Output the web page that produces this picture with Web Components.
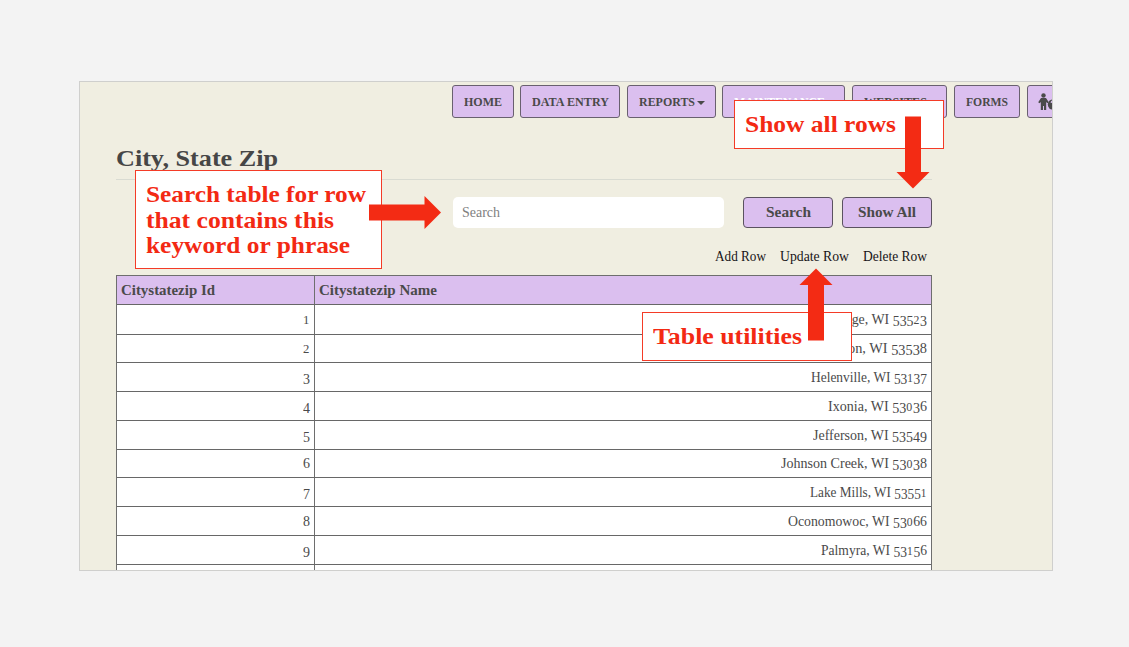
<!DOCTYPE html>
<html lang="en"><head><meta charset="utf-8"><title>City, State Zip</title>
<style>
html,body{margin:0;height:647px;overflow:hidden;background:#f3f3f3}
body{padding:81px 0 0 79px;box-sizing:border-box;font-family:"Liberation Serif",Georgia,serif;color:#4a4a4a}
</style></head><body>
<admin-page></admin-page>
<script>
function define(name, html, setup){
  const t=document.createElement('template'); t.innerHTML=html;
  customElements.define(name, class extends HTMLElement{
    connectedCallback(){
      if(this.shadowRoot) return;
      this.attachShadow({mode:'open'}).append(t.content.cloneNode(true));
      if(setup) setup(this,this.shadowRoot);
    }
  });
}
/* Stretches a line of text to the width given in the w attribute. */
define('fit-text',`<style>:host{display:inline-block;white-space:nowrap;line-height:1}span{display:inline-block;transform-origin:0 50%}</style><span><slot></slot></span>`,(el,r)=>{
  const s=r.querySelector('span'), w=+el.getAttribute('w');
  el.style.width=w+'px';
  s.style.transform='scaleX('+w/s.getBoundingClientRect().width+')';
});
/* Old-style figures: 0-2 at x-height, 3 4 5 7 9 hanging below the baseline. */
function figures(t){
  return t.replace(/[0-9]/g,d=>'012'.includes(d)
    ?`<span style="font-size:12px;line-height:0;letter-spacing:.6px">${d}</span>`
    :'34579'.includes(d)?`<span style="vertical-align:-2px;line-height:0">${d}</span>`:d);
}
define('nav-item',`<style>
:host{display:flex;box-sizing:border-box;height:33px;flex:none;border:1px solid #69606f;border-radius:3px;background:#dbbfef;align-items:center;padding:0 0 0 11px;font-size:13.2px;font-weight:bold;gap:2px}
.c{display:none;width:0;height:0;border:solid transparent;border-width:4px 4px 0;border-top-color:currentColor;margin-top:2px}
:host([menu]) .c{display:block}:host([active]){color:#fff}
</style><slot></slot><i class="c"></i>`,(el)=>{el.style.width=el.getAttribute('width')+'px'});
define('nav-bar',`<style>
:host{display:flex;gap:7px;padding:3px 0 0 372px;height:33px}
nav-item[active]{margin-left:-1px}
svg{display:block;margin-left:-1px}</style>
<nav-item width="62"><fit-text w="38">HOME</fit-text></nav-item>
<nav-item width="100" style="margin-left:-1px"><fit-text w="77">DATA ENTRY</fit-text></nav-item>
<nav-item width="89" menu><fit-text w="56">REPORTS</fit-text></nav-item>
<nav-item width="123" menu active><fit-text w="91">MAINTENANCE</fit-text></nav-item>
<nav-item width="95" menu><fit-text w="63">WEBSITES</fit-text></nav-item>
<nav-item width="66"><fit-text w="42">FORMS</fit-text></nav-item>
<nav-item width="60"><svg width="26" height="18" viewBox="0 0 26 18"><circle cx="5.5" cy="2.5" r="2.200" fill="#4a4a4a"/><path d="M3 5h5l2.800 4.200-1.300 1L8.200 9v8H6v-4h-1v4H2.800V9l-1.300 1.200-1.300-1z" fill="#4a4a4a"/><circle cx="15" cy="11.500" r="5.200" fill="#4a4a4a"/><path d="M13.200 10q.2-2 1.800-2t1.800 1.500q0 1-1.800 2v1" fill="none" stroke="#dbbfef" stroke-width="1.2"/></svg></nav-item>`);
define('action-button',`<style>:host{display:flex;box-sizing:border-box;width:90px;height:31px;border:1px solid #5b5260;border-radius:4px;background:#dbbfef;align-items:center;justify-content:center;font-size:14px;font-weight:bold}</style><slot></slot>`);
define('search-bar',`<style>:host{display:flex;margin:17px 0 0 337px;height:31px}
.in{box-sizing:border-box;width:271px;margin-right:19px;border-radius:5px;background:#fff;color:#808080;font-size:14px;display:flex;align-items:center;padding:0 0 0 9px}
action-button+action-button{margin-left:9px}</style>
<div class="in"><fit-text w="38">Search</fit-text></div>
<action-button><fit-text w="45">Search</fit-text></action-button><action-button><fit-text w="58">Show All</fit-text></action-button>`);
define('row-tools',`<style>:host{display:flex;justify-content:flex-end;gap:14px;padding-right:5px;margin-top:21px;height:26px;font-size:14.2px;color:#171417}</style>
<fit-text w="51">Add Row</fit-text><fit-text w="69">Update Row</fit-text><fit-text w="64">Delete Row</fit-text>`);
define('data-table',`<style>
:host{display:block;box-sizing:border-box;width:816px;border:solid #6e6e6e;border-width:1px 1px 0;background:#fff;font-size:14.2px}
.r{display:grid;grid-template-columns:198px 1fr;box-sizing:border-box;border-bottom:1px solid #676767}
.r>div{display:flex;align-items:center;justify-content:flex-end;padding:0 4px}
.r>div:first-child{border-right:1px solid #6e6e6e}
.h{height:29px;background:#dbbfef;font-weight:bold;font-size:13.8px}.h>div{justify-content:flex-start;padding-top:2px}
</style><div class="r h"><div><fit-text w="94">Citystatezip Id</fit-text></div><div><fit-text w="118">Citystatezip Name</fit-text></div></div>`,(el,r)=>{
  [['Cambridge, WI 53523',124,30],['Fort Atkinson, WI 53538',144,28],['Helenville, WI 53137',116,29],['Ixonia, WI 53036',99,29],['Jefferson, WI 53549',114,29],['Johnson Creek, WI 53038',146,28],['Lake Mills, WI 53551',117,29],['Oconomowoc, WI 53066',139,29],['Palmyra, WI 53156',106,29],['',0,20]].forEach(([n,w,h],i)=>{
    const d=document.createElement('div'); d.className='r'; d.style.height=h+'px';
    d.innerHTML=n?`<div><fit-text w="7">${figures(String(i+1))}</fit-text></div><div><fit-text w="${w}">${figures(n)}</fit-text></div>`:'<div></div><div></div>';
    r.append(d);
  });
});
/* Annotation box lying over the page. */
define('call-out',`<style>:host{position:absolute;box-sizing:border-box;border:1px solid #f43b27;background:#fff;color:#f32913;font-size:22.5px;font-weight:bold;padding:13px 0 0 10px;display:flex;flex-direction:column;gap:3px}</style><slot></slot>`);
define('arrow-layer',`<style>:host{position:absolute;inset:0}svg{display:block}</style>
<svg width="973" height="489" viewBox="80 82 973 489" fill="#f32b14"><path d="M369 204.5h55.5V196L441 212.5 424.500 229v-8.500H369z"/><path d="M905 116.500h16V172h8.500L913 188.500 896.500 172H905z"/><path d="M808 340.500h16V285h8.500L816 268.500 799.500 285H808z"/></svg>`);
define('admin-page',`<style>
:host{display:block;position:relative;box-sizing:border-box;width:974px;height:490px;border:1px solid #cfcfcd;background:#f0eee1;overflow:hidden}
main{margin:26px 0 0 36px;width:816px}
h1{margin:0;font-size:24px;line-height:28px;height:33px;border-bottom:1px solid #d9dbd2;display:flex;align-items:flex-start;padding-top:2px;color:#464646}
</style><nav-bar></nav-bar><main><h1><fit-text w="162">City, State Zip</fit-text></h1><search-bar></search-bar><row-tools></row-tools><data-table></data-table></main>
<call-out style="left:55px;top:88px;width:247px;height:99px"><fit-text w="220">Search table for row</fit-text><fit-text w="188">that contains this</fit-text><fit-text w="204">keyword or phrase</fit-text></call-out>
<call-out style="left:654px;top:18px;width:210px;height:49px"><fit-text w="151">Show all rows</fit-text></call-out>
<call-out style="left:562px;top:230px;width:210px;height:49px"><fit-text w="149">Table utilities</fit-text></call-out>
<arrow-layer></arrow-layer>`);
</script></body></html>
